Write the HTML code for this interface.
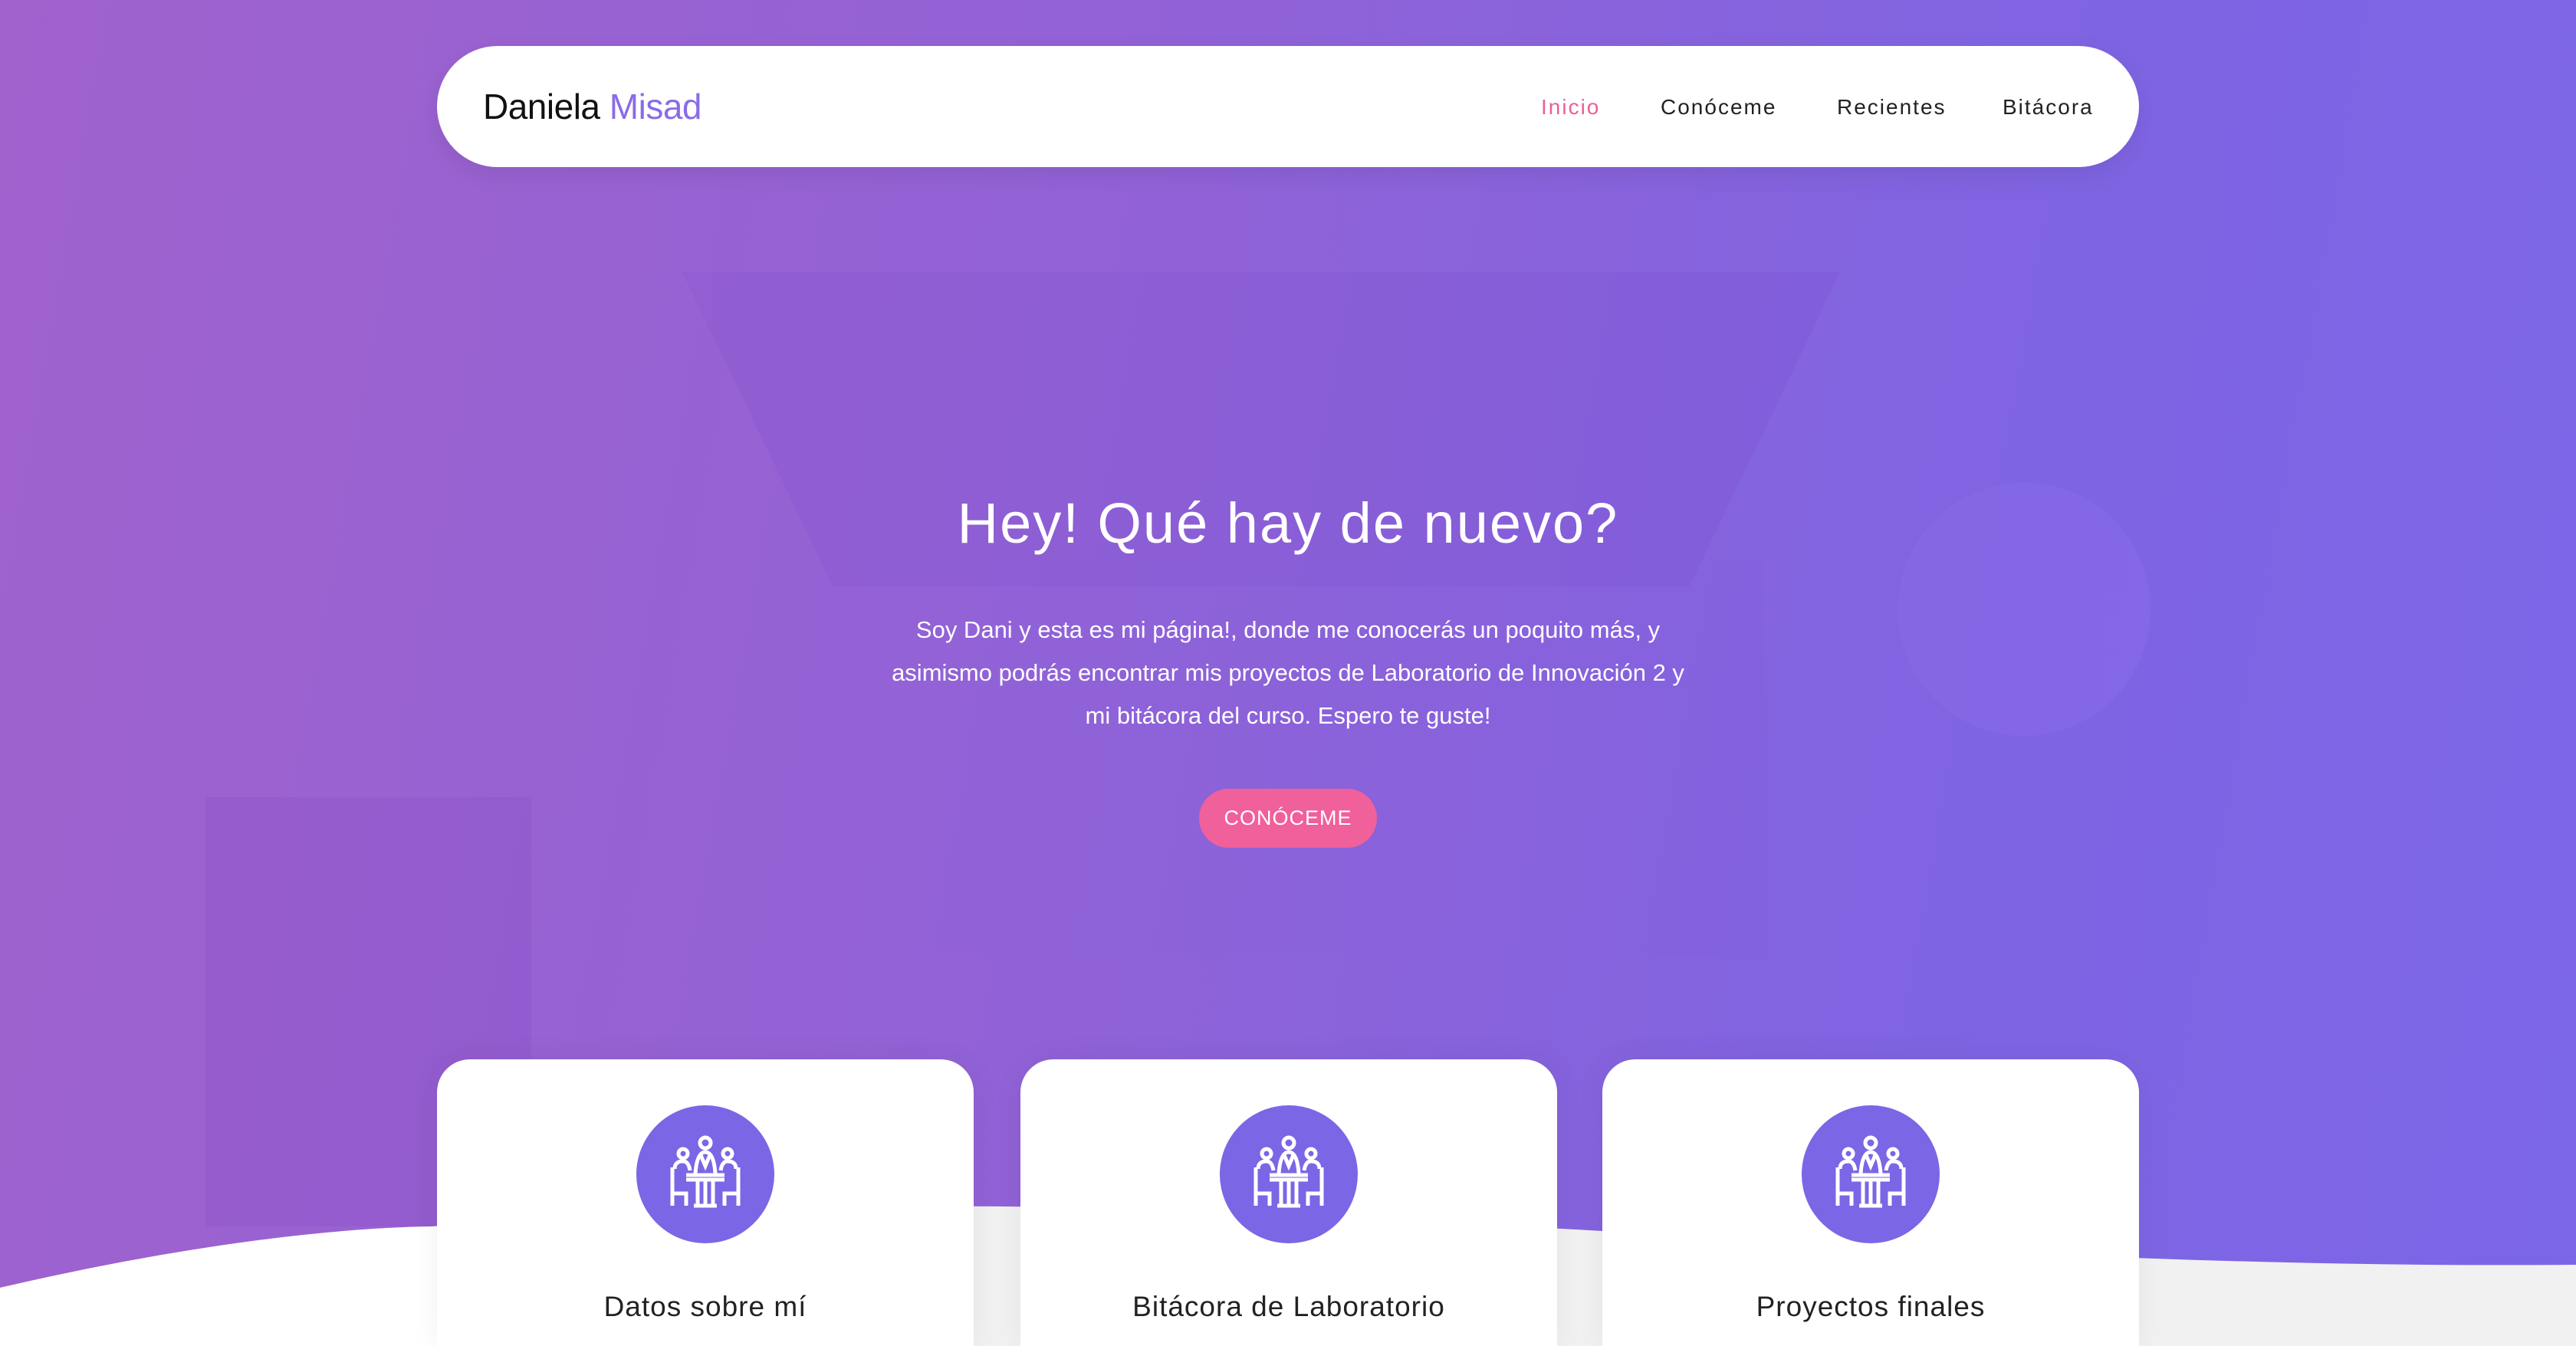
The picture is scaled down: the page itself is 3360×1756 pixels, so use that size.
<!DOCTYPE html>
<html><head><meta charset="utf-8"><style>
*{margin:0;padding:0;box-sizing:border-box}
html{width:3360px;height:1756px;overflow:hidden}
body{width:3360px;height:1756px;overflow:hidden;position:relative;font-family:"Liberation Sans",sans-serif;background:linear-gradient(100deg,#a062cd 0%,#9262d6 40%,#7f64e2 75%,#7c66e8 100%)}
.nav{position:absolute;left:570px;top:60px;width:2220px;height:158px;background:#fff;border-radius:79px;box-shadow:0 10px 30px rgba(0,0,0,.08)}
.logo{position:absolute;left:60px;top:52px;font-size:46px;color:#111;letter-spacing:-0.5px}
.logo span{color:#8a6ce6}
.nav a{position:absolute;top:64px;font-size:28px;color:#222;letter-spacing:2px;text-decoration:none}
h1{position:absolute;left:0;width:3360px;top:640px;text-align:center;color:#fff;font-weight:normal;font-size:74px;letter-spacing:2px}
p{position:absolute;left:1030px;width:1300px;top:794px;text-align:center;color:#fff;font-size:31px;line-height:56px;white-space:nowrap}
.btn{position:absolute;left:1564px;top:1029px;width:232px;height:77px;border-radius:39px;background:#f0609a;color:#fff;font-size:27px;text-align:center;line-height:77px;letter-spacing:1px}
.card{position:absolute;top:1382px;width:700px;height:374px;background:#fff;border-radius:43px 43px 0 0;box-shadow:0 0 40px rgba(0,0,0,.06)}
.circ{position:absolute;left:260px;top:60px;width:180px;height:180px;border-radius:50%;background:#7b66e6}
.circ svg{position:absolute;left:35px;top:35px}
.card h3{position:absolute;top:302px;width:100%;text-align:center;font-weight:normal;font-size:37px;color:#222;letter-spacing:1px}
.deco{position:absolute;background:rgba(110,60,200,.1)}
</style></head><body>
<div class="deco" style="left:890px;top:355px;width:1510px;height:410px;clip-path:polygon(0 0,100% 0,87% 100%,13% 100%)"></div>
<div class="deco" style="left:1140px;top:730px;width:1160px;height:520px;background:rgba(140,100,230,.1)"></div>
<div class="deco" style="left:268px;top:1040px;width:425px;height:560px;background:rgba(120,60,190,.14)"></div>
<div class="deco" style="left:2475px;top:630px;width:330px;height:330px;border-radius:50%;background:rgba(160,130,240,.14)"></div>
<svg style="position:absolute;left:0;top:0" width="3360" height="1756"><path d="M0 1680 C 500 1570,1200 1560,1700 1585 C 2300 1615,2800 1655,3360 1650 L3360 1756 L0 1756 Z" fill="#f1f1f1"/><path d="M0 1680 C 300 1610,500 1600,570 1600 L570 1756 L0 1756 Z" fill="#fff"/></svg>
<div class="nav"><div class="logo">Daniela <span>Misad</span></div>
<a style="left:1440px;color:#ec5f98">Inicio</a><a style="left:1596px">Conóceme</a><a style="left:1826px">Recientes</a><a style="left:2042px">Bitácora</a></div>
<h1>Hey! Qué hay de nuevo?</h1>
<p>Soy Dani y esta es mi página!, donde me conocerás un poquito más, y<br>asimismo podrás encontrar mis proyectos de Laboratorio de Innovación 2 y<br>mi bitácora del curso. Espero te guste!</p>
<div class="btn">CONÓCEME</div>
<svg width="0" height="0" style="position:absolute"><defs><g id="ic" fill="none" stroke="#fff" stroke-width="5"><circle cx="55" cy="14" r="7"/><circle cx="26" cy="28" r="6"/><circle cx="84" cy="28" r="6"/><path d="M42 54 Q44 26 55 26 Q66 26 68 54 M49 30 L55 44 L61 30"/><path d="M15 48 Q15 38 26 38 Q33 38 35 50 M95 48 Q95 38 84 38 Q77 38 75 50"/><path d="M30 56 H80 M30 62 H80"/><path d="M12 46 V96 M12 80 H30 V96 M98 46 V96 M98 80 H80 V96"/><path d="M45 62 V96 M55 62 V96 M65 62 V96 M40 96 H70"/></g></defs></svg>
<div class="card" style="left:570px"><div class="circ"><svg width="110" height="110"><use href="#ic"/></svg></div><h3>Datos sobre mí</h3></div>
<div class="card" style="left:1331px"><div class="circ"><svg width="110" height="110"><use href="#ic"/></svg></div><h3>Bitácora de Laboratorio</h3></div>
<div class="card" style="left:2090px"><div class="circ"><svg width="110" height="110"><use href="#ic"/></svg></div><h3>Proyectos finales</h3></div>
</body></html>
